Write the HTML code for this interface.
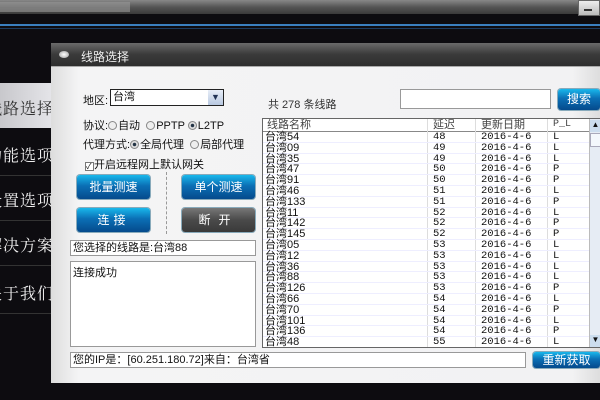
<!DOCTYPE html>
<html><head><meta charset="utf-8"><style>
*{margin:0;padding:0;box-sizing:border-box}
body{width:600px;height:400px;overflow:hidden;background:#0d0c10;font-family:"Liberation Sans","Noto Sans CJK SC",sans-serif;font-size:11px;color:#111;position:relative}
.a{position:absolute}
.side{font-family:"Liberation Serif","Noto Serif CJK SC",serif;color:#eee;font-size:16px;letter-spacing:1px;white-space:nowrap}
.btn{position:absolute;height:24px;border-radius:3px;color:#fff;font-size:12px;text-align:center;line-height:24px;background:linear-gradient(#19b8ec,#0b6fb5 45%,#054a8c);box-shadow:0 0 0 1px #8ab}
.in{position:absolute;background:#fff;border:1px solid #999}
.row{position:absolute;left:0;height:10.8px;line-height:10.8px;font-size:11px;white-space:nowrap;width:330px;border-bottom:1px solid #eef}
.row span{position:absolute;font-family:"Liberation Mono","Noto Sans CJK SC",monospace;font-size:10.5px}
.rad{display:inline-block;width:9px;height:9px;border-radius:50%;border:1px solid #888;background:#eee;vertical-align:-1px;margin-right:1px}
.rad.on{background:radial-gradient(#234 30%,#ddd 40%)}
</style></head><body>
<div class="a" style="left:0;top:0;width:600px;height:14px;background:linear-gradient(#888,#555 50%,#3a3a3a)"></div>
<div class="a" style="left:0;top:2px;width:130px;height:10px;background:#999;opacity:.6"></div>
<div class="a" style="left:578px;top:0;width:22px;height:16px;background:linear-gradient(#eee,#bbb);border:1px solid #666"></div>
<div class="a" style="left:584px;top:9px;width:8px;height:2px;background:#333"></div>
<div class="a" style="left:0;top:24px;width:600px;height:2px;background:#3a7fc0"></div>
<div class="a" style="left:0;top:28px;width:600px;height:1px;background:#1a3a60"></div>
<!-- sidebar -->
<div class="a" style="left:0;top:83px;width:51px;height:45px;background:linear-gradient(90deg,#c8c8cc,#e4e4e8)"></div>
<div class="a side" style="left:-14px;top:96px;color:#333">线路选择</div>
<div class="a side" style="left:-14px;top:143px">功能选项</div>
<div class="a side" style="left:-14px;top:188px">设置选项</div>
<div class="a side" style="left:-14px;top:233px">解决方案</div>
<div class="a side" style="left:-14px;top:281px">关于我们</div>
<div class="a" style="left:0;top:175px;width:51px;height:1px;background:#333"></div>
<div class="a" style="left:0;top:220px;width:51px;height:1px;background:#333"></div>
<div class="a" style="left:0;top:265px;width:51px;height:1px;background:#333"></div>
<div class="a" style="left:0;top:313px;width:51px;height:1px;background:#333"></div>
<!-- dialog -->
<div class="a" style="left:51px;top:43px;width:549px;height:340px;background:#e9e9eb;border-left:1px solid #777"></div>
<div class="a" style="left:51px;top:43px;width:549px;height:24px;background:linear-gradient(#6a6a6a,#3a3a3a 50%,#2e2e2e);border-bottom:1px solid #aaa"></div>
<div class="a" style="left:59px;top:51px;width:10px;height:7px;border-radius:50%;background:radial-gradient(#fff,#999)"></div>
<div class="a" style="left:81px;top:48px;color:#eee;font-size:12px">线路选择</div>
<div class="a" style="left:51px;top:67px;width:549px;height:316px;background:linear-gradient(90deg,#ddd,#f4f4f5 5%,#f2f2f3 95%,#ddd)"></div>
<div class="a" style="left:83px;top:92px;font-size:11px">地区:</div>
<div class="a" style="left:110px;top:89px;width:114px;height:17px;background:#fff;border:1px solid #222;padding-left:2px;line-height:15px">台湾</div>
<div class="a" style="left:208px;top:90px;width:15px;height:15px;background:linear-gradient(#e8eef8,#b8c8e0);color:#235;text-align:center;font-size:9px;line-height:15px">▼</div>
<div class="a" style="left:83px;top:117px">协议:<span class="rad"></span>自动 &nbsp;<span class="rad"></span>PPTP <span class="rad on"></span>L2TP</div>
<div class="a" style="left:83px;top:136px">代理方式:<span class="rad on"></span>全局代理 &nbsp;<span class="rad"></span>局部代理</div>
<div class="a" style="left:85px;top:156px"><span style="display:inline-block;width:9px;height:9px;border:1px solid #777;background:#fff;font-size:8px;line-height:8px;vertical-align:-1px">✓</span>开启远程网上默认网关</div>
<div class="btn" style="left:77px;top:175px;width:73px">批量测速</div>
<div class="btn" style="left:182px;top:175px;width:73px">单个测速</div>
<div class="btn" style="left:77px;top:208px;width:73px;letter-spacing:4px">连接</div>
<div class="btn" style="left:182px;top:208px;width:73px;background:linear-gradient(#777,#4a4a4a 50%,#3a3a3a);letter-spacing:8px">断开</div>
<div class="a" style="left:166px;top:172px;height:62px;border-left:1px dashed #999"></div>
<div class="in" style="left:70px;top:240px;width:186px;height:16px;padding-left:2px;line-height:14px">您选择的线路是:台湾88</div>
<div class="in" style="left:70px;top:261px;width:186px;height:86px;padding:2px">连接成功</div>
<div class="in" style="left:70px;top:352px;width:456px;height:16px;padding-left:2px;line-height:14px">您的IP是：[60.251.180.72]来自：台湾省</div>
<div class="btn" style="left:533px;top:352px;width:67px;height:16px;line-height:16px">重新获取</div>
<div class="a" style="left:268px;top:96px;color:#333">共 278 条线路</div>
<div class="in" style="left:400px;top:89px;width:151px;height:20px"></div>
<div class="btn" style="left:558px;top:89px;width:42px;height:21px;line-height:21px">搜索</div>
<!-- list -->
<div class="a" style="left:262px;top:118px;width:338px;height:230px;background:#fff;border:1px solid #666;border-right:0;overflow:hidden">
<div class="a" style="left:0;top:0;width:326px;height:13px;border-bottom:1px solid #888;color:#444;line-height:12px">
<span class="a" style="left:4px">线路名称</span><span class="a" style="left:170px">延迟</span><span class="a" style="left:218px">更新日期</span><span class="a" style="left:290px;font-family:'Liberation Mono',monospace;font-size:10px">P_L</span></div>
<div class="a" style="left:164px;top:0;height:230px;border-left:1px solid #ddd"></div>
<div class="a" style="left:212px;top:0;height:230px;border-left:1px solid #ddd"></div>
<div class="a" style="left:284px;top:0;height:230px;border-left:1px solid #ddd"></div>
<div class="a" style="left:326px;top:0;width:12px;height:230px;background:#e6ecf4;border-left:1px solid #bbb"></div>
<div class="a" style="left:327px;top:1px;width:11px;height:12px;background:#cde;font-size:8px;text-align:center">▲</div>
<div class="a" style="left:327px;top:14px;width:11px;height:14px;background:#f4f8fc;border:1px solid #aab"></div>
<div class="a" style="left:327px;top:216px;width:11px;height:12px;background:#cde;font-size:8px;text-align:center">▼</div>
<div id="rows"></div>
</div>
<script>
var d=[["54",48,"L"],["09",49,"L"],["35",49,"L"],["47",50,"P"],["91",50,"P"],["46",51,"L"],["133",51,"P"],["11",52,"L"],["142",52,"P"],["145",52,"P"],["05",53,"L"],["12",53,"L"],["36",53,"L"],["88",53,"L"],["126",53,"P"],["66",54,"L"],["70",54,"P"],["101",54,"L"],["136",54,"P"],["48",55,"L"]];
var h="";d.forEach(function(r,i){h+='<div class="row" style="top:'+(13+i*10.8)+'px;width:326px"><span style="left:2px;font-family:\'Liberation Sans\',\'Noto Sans CJK SC\',sans-serif;font-size:11px">台湾'+r[0]+'</span><span style="left:170px">'+r[1]+'</span><span style="left:218px">2016-4-6</span><span style="left:290px">'+r[2]+'</span></div>'});
document.getElementById("rows").innerHTML=h;
</script>
</body></html>
